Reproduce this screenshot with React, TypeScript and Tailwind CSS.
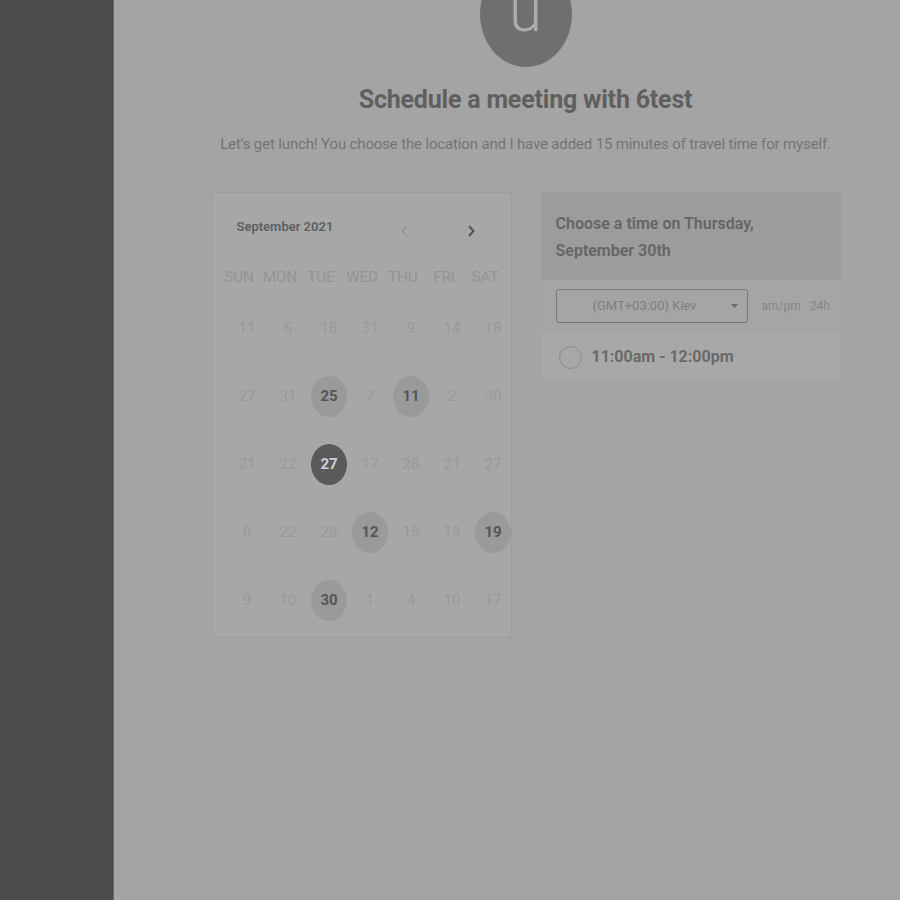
import React from "react";

const rows: { d: string; t: "n" | "a" | "s" }[][] = [
  [
    { d: "11", t: "n" }, { d: "6", t: "n" }, { d: "18", t: "n" }, { d: "31", t: "n" }, { d: "9", t: "n" }, { d: "14", t: "n" }, { d: "18", t: "n" },
  ],
  [
    { d: "27", t: "n" }, { d: "31", t: "n" }, { d: "25", t: "a" }, { d: "7", t: "n" }, { d: "11", t: "a" }, { d: "2", t: "n" }, { d: "30", t: "n" },
  ],
  [
    { d: "21", t: "n" }, { d: "22", t: "n" }, { d: "27", t: "s" }, { d: "17", t: "n" }, { d: "28", t: "n" }, { d: "21", t: "n" }, { d: "27", t: "n" },
  ],
  [
    { d: "6", t: "n" }, { d: "22", t: "n" }, { d: "28", t: "n" }, { d: "12", t: "a" }, { d: "15", t: "n" }, { d: "19", t: "n" }, { d: "19", t: "a" },
  ],
  [
    { d: "9", t: "n" }, { d: "10", t: "n" }, { d: "30", t: "a" }, { d: "1", t: "n" }, { d: "4", t: "n" }, { d: "10", t: "n" }, { d: "17", t: "n" },
  ],
];

const days = ["SUN", "MON", "TUE", "WED", "THU", "FRI", "SAT"];

export default function App() {
  return (
    <div
      className="flex h-[900px] w-[900px] overflow-hidden bg-[#a4a4a4]"
      style={{ fontFamily: "Roboto, 'Liberation Sans', sans-serif" }}
    >
      <div className="h-full w-[114px] shrink-0 border-r border-[#666666] bg-[#4b4b4b]" />
      <div className="flex flex-1 flex-col items-center pl-[45px] pr-[8px]">
        <div className="mt-[-39px] flex h-[106px] w-[92px] items-start justify-center rounded-[50%] bg-[#6f6f6f]">
          <span className="mt-[28px] text-[60px] font-light leading-[44px] text-[#acacac]">u</span>
        </div>
        <h1 className="mt-[19px] text-[25px] font-bold leading-[28px] tracking-[-0.2px] text-[#5f5f5f]">
          Schedule a meeting with 6test
        </h1>
        <p className="mt-[20px] text-[15px] leading-[20px] tracking-[-0.15px] text-[#747474]">
          Let’s get lunch! You choose the location and I have added 15 minutes of travel time for myself.
        </p>
        <div className="mt-[38px] flex gap-[30px]">
          <div className="h-[446px] w-[301px] overflow-hidden rounded-[3px] border border-[#9d9d9d] bg-[#a7a7a7] pt-[23px]">
            <div className="flex h-[22px] items-center">
              <span className="ml-[25px] text-[13px] font-semibold text-[#5e5e5e]">September 2021</span>
              <svg className="ml-[67px] mt-[8px]" width="10" height="14" viewBox="0 0 10 14">
                <path d="M7 2 L2.5 7 L7 12" fill="none" stroke="#939393" strokeWidth="1.6" />
              </svg>
              <svg className="ml-[56px] mt-[8px]" width="10" height="14" viewBox="0 0 10 14">
                <path d="M3 2 L7.5 7 L3 12" fill="none" stroke="#555555" strokeWidth="2" />
              </svg>
            </div>
            <div className="mt-[28px] ml-[7px] grid h-[20px] w-[287px] grid-cols-7 items-center">
              {days.map((d) => (
                <div key={d} className="text-center text-[15px] text-[#939393]">{d}</div>
              ))}
            </div>
            <div className="ml-[15px] mt-[8px] w-[287px]">
              {rows.map((r, i) => (
                <div key={i} className="grid h-[68px] grid-cols-7 items-center">
                  {r.map((c, j) => (
                    <div key={j} className="flex items-center justify-center">
                      {c.t === "n" && (
                        <span className="text-[15px] text-[#999999]">{c.d}</span>
                      )}
                      {c.t === "a" && (
                        <span className="flex h-[41px] w-[36px] items-center justify-center rounded-[50%] bg-[#9a9a9a] text-[15px] font-bold text-[#555555]">
                          {c.d}
                        </span>
                      )}
                      {c.t === "s" && (
                        <span className="flex h-[41px] w-[36px] items-center justify-center rounded-[50%] bg-[#5a5a5a] text-[15px] font-bold text-[#cfcfcf]">
                          {c.d}
                        </span>
                      )}
                    </div>
                  ))}
                </div>
              ))}
            </div>
          </div>
          <div className="h-[190px] w-[299px] overflow-hidden rounded-[3px] bg-[#a8a8a8] shadow-[0_0_1px_#999]">
            <div className="h-[88px] bg-[#9c9c9c] px-[14px] pt-[18px] text-[16px] font-semibold leading-[27px] text-[#656565]">
              Choose a time on Thursday,
              <br />
              September 30th
            </div>
            <div className="flex h-[52px] items-center bg-[#a5a5a5] pl-[14px]">
              <div className="relative flex h-[34px] w-[192px] items-center rounded-[3px] border border-[#7a7a7a] pl-[36px] text-[13px] text-[#7e7e7e]">
                (GMT+03:00) Kiev
                <svg className="absolute right-[9px] top-[14px]" width="7" height="4" viewBox="0 0 7 4">
                  <path d="M0 0 L7 0 L3.5 4 Z" fill="#6a6a6a" />
                </svg>
              </div>
              <span className="ml-[14px] text-[12px] text-[#868686]">am/pm</span>
              <span className="ml-[9px] text-[12px] text-[#868686]">24h</span>
            </div>
            <div className="flex h-[50px] items-center pl-[17px]">
              <span className="h-[23px] w-[23px] rounded-full border-[1.5px] border-[#8a8a8a]" />
              <span className="ml-[10px] text-[16px] font-bold text-[#6a6a6a]">11:00am - 12:00pm</span>
            </div>
          </div>
        </div>
        <div className="flex-1" />
      </div>
    </div>
  );
}
